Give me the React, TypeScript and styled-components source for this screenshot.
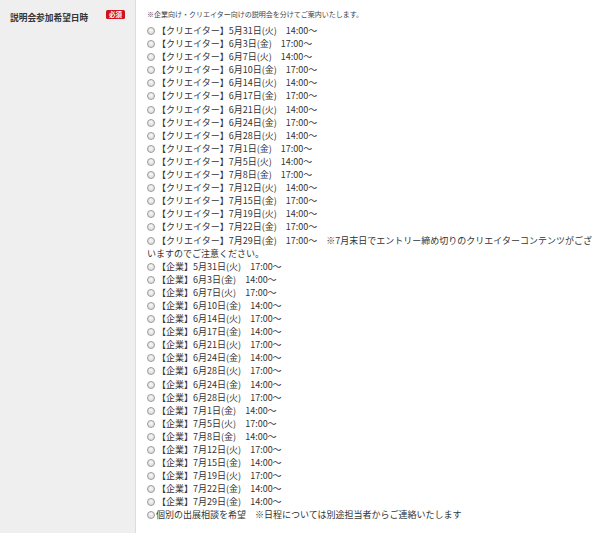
import styled, { createGlobalStyle } from "styled-components";

const GlobalStyle = createGlobalStyle`
  html, body {
    margin: 0;
    padding: 0;
    background: #ffffff;
  }
  body {
    font-family: "Noto Sans CJK JP", "Noto Sans", sans-serif;
    color: #333333;
  }
`;

type Slot = { group: string; date: string; time: string; note?: string };

const creatorSlots: Slot[] = [
  ["5月31日(火)", "14:00〜"],
  ["6月3日(金)", "17:00〜"],
  ["6月7日(火)", "14:00〜"],
  ["6月10日(金)", "17:00〜"],
  ["6月14日(火)", "14:00〜"],
  ["6月17日(金)", "17:00〜"],
  ["6月21日(火)", "14:00〜"],
  ["6月24日(金)", "17:00〜"],
  ["6月28日(火)", "14:00〜"],
  ["7月1日(金)", "17:00〜"],
  ["7月5日(火)", "14:00〜"],
  ["7月8日(金)", "17:00〜"],
  ["7月12日(火)", "14:00〜"],
  ["7月15日(金)", "17:00〜"],
  ["7月19日(火)", "14:00〜"],
  ["7月22日(金)", "17:00〜"],
].map(([date, time]) => ({ group: "クリエイター", date, time }));

creatorSlots.push({
  group: "クリエイター",
  date: "7月29日(金)",
  time: "17:00〜",
  note: "※7月末日でエントリー締め切りのクリエイターコンテンツがございますのでご注意ください。",
});

const companySlots: Slot[] = [
  ["5月31日(火)", "17:00〜"],
  ["6月3日(金)", "14:00〜"],
  ["6月7日(火)", "17:00〜"],
  ["6月10日(金)", "14:00〜"],
  ["6月14日(火)", "17:00〜"],
  ["6月17日(金)", "14:00〜"],
  ["6月21日(火)", "17:00〜"],
  ["6月24日(金)", "14:00〜"],
  ["6月28日(火)", "17:00〜"],
  ["6月24日(金)", "14:00〜"],
  ["6月28日(火)", "17:00〜"],
  ["7月1日(金)", "14:00〜"],
  ["7月5日(火)", "17:00〜"],
  ["7月8日(金)", "14:00〜"],
  ["7月12日(火)", "17:00〜"],
  ["7月15日(金)", "14:00〜"],
  ["7月19日(火)", "17:00〜"],
  ["7月22日(金)", "14:00〜"],
  ["7月29日(金)", "14:00〜"],
].map(([date, time]) => ({ group: "企業", date, time }));

export default function App() {
  const slots = [...creatorSlots, ...companySlots];
  return (
    <>
      <GlobalStyle />
      <FormRow>
        <LabelCell>
          <LabelText>説明会参加希望日時</LabelText>
          <Required>必須</Required>
        </LabelCell>
        <FieldCell>
          <Notice>※企業向け・クリエイター向けの説明会を分けてご案内いたします。</Notice>
          <OptionList>
            {slots.map((s, i) => (
              <Option key={i}>
                <Radio type="radio" name="session" />
                【{s.group}】{s.date}　{s.time}
                {s.note && <>　{s.note}</>}
              </Option>
            ))}
            <Option>
              <Radio type="radio" name="session" $tight />
              個別の出展相談を希望　※日程については別途担当者からご連絡いたします
            </Option>
          </OptionList>
        </FieldCell>
      </FormRow>
    </>
  );
}

const FormRow = styled.div`
  display: flex;
  width: 600px;
  min-height: 533px;
`;

const LabelCell = styled.div`
  width: 136px;
  flex-shrink: 0;
  box-sizing: border-box;
  background: #efefef;
  border-right: 1px solid #dcdcdc;
  padding: 11px 10px 0 10px;
  display: flex;
  align-items: flex-start;
  justify-content: space-between;
`;

const LabelText = styled.div`
  font-size: 8.7px;
  font-weight: 700;
  line-height: 14px;
  color: #333333;
`;

const Required = styled.span`
  margin-top: -1px;
  background: #d0121b;
  color: #ffffff;
  font-size: 6.5px;
  font-weight: 700;
  line-height: 9px;
  padding: 0 3px;
  border-radius: 1.5px;
`;

const FieldCell = styled.div`
  flex: 1;
  padding: 9px 3px 10px 11px;
`;

const Notice = styled.div`
  font-size: 7px;
  line-height: 10px;
  color: #444444;
  margin-bottom: 5px;
`;

const OptionList = styled.div`
  display: flex;
  flex-direction: column;
`;

const Option = styled.label`
  display: block;
  font-size: 9px;
  line-height: 13.1px;
  color: #333333;
`;

const Radio = styled.input<{ $tight?: boolean }>`
  appearance: none;
  -webkit-appearance: none;
  box-sizing: border-box;
  width: 8px;
  height: 8px;
  margin: 0 ${(p) => (p.$tight ? "1px" : "2px")} 0 0;
  vertical-align: -1px;
  border: 1px solid #9a9a9a;
  border-radius: 50%;
  background: radial-gradient(circle at 50% 35%, #f8f8f8 0%, #d6d6d6 100%);
`;
